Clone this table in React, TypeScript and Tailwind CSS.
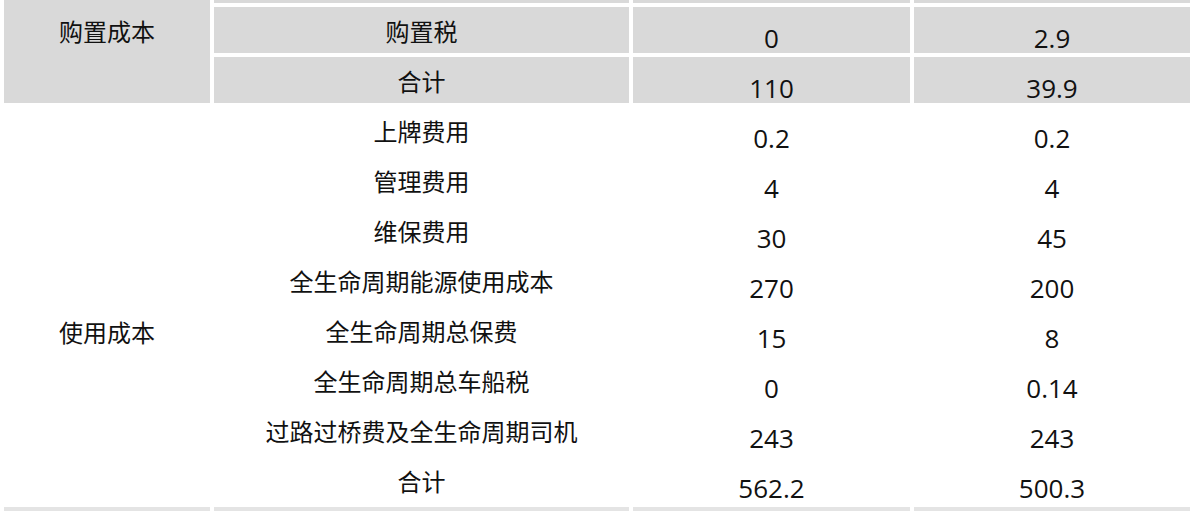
import React from "react";

type Row = { label: string; a: string; b: string };

const grayRows: Row[] = [
  { label: "", a: "110", b: "37" },
  { label: "购置税", a: "0", b: "2.9" },
  { label: "合计", a: "110", b: "39.9" },
];

const whiteRows: Row[] = [
  { label: "上牌费用", a: "0.2", b: "0.2" },
  { label: "管理费用", a: "4", b: "4" },
  { label: "维保费用", a: "30", b: "45" },
  { label: "全生命周期能源使用成本", a: "270", b: "200" },
  { label: "全生命周期总保费", a: "15", b: "8" },
  { label: "全生命周期总车船税", a: "0", b: "0.14" },
  { label: "过路过桥费及全生命周期司机", a: "243", b: "243" },
  { label: "合计", a: "562.2", b: "500.3" },
];

const cnCell =
  "h-[46px] p-0 pt-[2px] align-middle text-center text-[24px] leading-[32px] text-[#111111] font-['Noto_Sans_CJK_SC','Noto_Sans',sans-serif]";
const numCell =
  "h-[46px] p-0 pt-[16px] align-middle text-center text-[26px] leading-[30px] font-medium text-[#111111] font-['Open_Sans','Noto_Sans',sans-serif]";

export default function App() {
  return (
    <div className="w-[1200px] h-[511px] overflow-hidden bg-white">
      <table className="mt-[-47px] w-[1194px] table-fixed border-separate border-spacing-[4px]">
        <colgroup>
          <col className="w-[206px]" />
          <col className="w-[415px]" />
          <col className="w-[277px]" />
          <col className="w-[276px]" />
        </colgroup>
        <tbody>
          {grayRows.map((r, i) => (
            <tr key={"g" + i}>
              {i === 0 && (
                <td rowSpan={3} className={cnCell + " bg-[#d9d9d9]"}>
                  购置成本
                </td>
              )}
              <td className={cnCell + " bg-[#d9d9d9]"}>{r.label}</td>
              <td className={numCell + " bg-[#d9d9d9]"}>{r.a}</td>
              <td className={numCell + " bg-[#d9d9d9]"}>{r.b}</td>
            </tr>
          ))}
          {whiteRows.map((r, i) => (
            <tr key={"w" + i}>
              {i === 0 && (
                <td
                  rowSpan={8}
                  className="p-0 pt-[54px] align-middle text-center text-[24px] leading-[32px] text-[#111111] font-['Noto_Sans_CJK_SC','Noto_Sans',sans-serif] bg-white"
                >
                  使用成本
                </td>
              )}
              <td className={cnCell + " bg-white"}>{r.label}</td>
              <td className={numCell + " bg-white"}>{r.a}</td>
              <td className={numCell + " bg-white"}>{r.b}</td>
            </tr>
          ))}
          <tr>
            <td className="h-[46px] p-0 bg-[#e4e4e4]" />
            <td className="h-[46px] p-0 bg-[#e4e4e4]" />
            <td className="h-[46px] p-0 bg-[#e4e4e4]" />
            <td className="h-[46px] p-0 bg-[#e4e4e4]" />
          </tr>
        </tbody>
      </table>
    </div>
  );
}
